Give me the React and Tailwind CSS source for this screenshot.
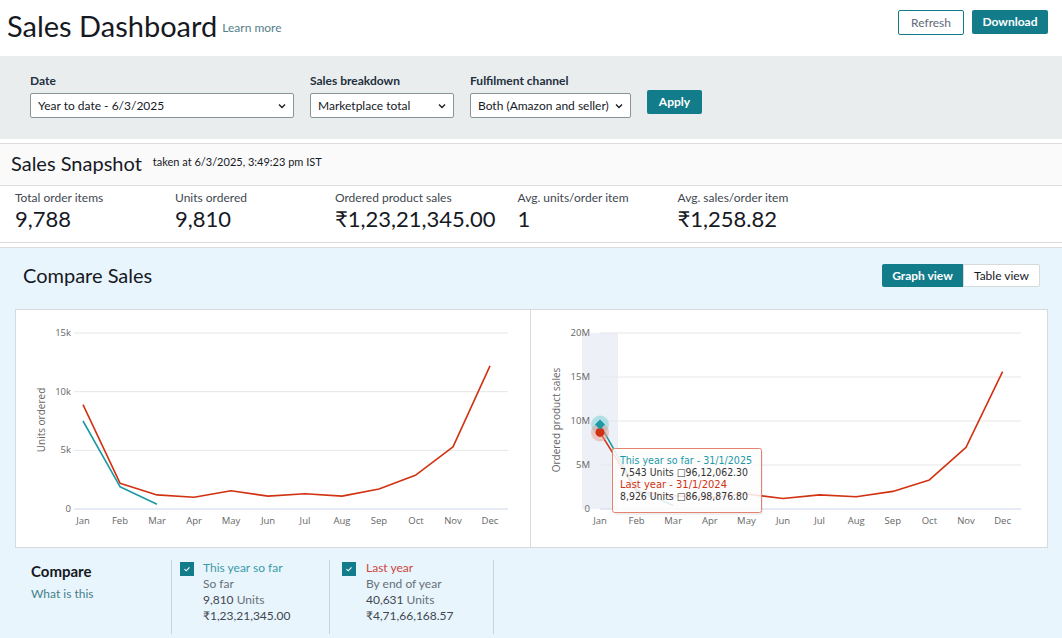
import React from 'react';

const months = ['Jan', 'Feb', 'Mar', 'Apr', 'May', 'Jun', 'Jul', 'Aug', 'Sep', 'Oct', 'Nov', 'Dec'];

const RED = '#d13212';
const TEAL = '#1b9aa6';

const pts = (vals, fx, fy) => vals.map((v, i) => `${fx(i)},${fy(v)}`).join(' ');

const UnitsChart = () => {
  const x = (i) => 83 + i * 37;
  const y = (v) => 509 - (v / 15000) * 176;
  const red = [8900, 2200, 1200, 1000, 1550, 1100, 1300, 1100, 1700, 2900, 5300, 12200];
  const teal = [7500, 1900, 400];
  const ticks = [
    [0, '0'],
    [5000, '5k'],
    [10000, '10k'],
    [15000, '15k'],
  ];
  return (
    <svg viewBox="16 310 514 237" className="block w-full h-full" style={{ fontFamily: "'Open Sans', sans-serif" }}>
      {ticks.map(([v, label]) => (
        <g key={label}>
          <line x1="74" x2="508" y1={y(v)} y2={y(v)} stroke={v === 0 ? '#ccd6eb' : '#e6e6e6'} strokeWidth="1" />
          <text x="71" y={y(v) + 3} textAnchor="end" fontSize="9.5" fill="#666">
            {label}
          </text>
        </g>
      ))}
      {months.map((m, i) => (
        <text key={m} x={x(i)} y="524" textAnchor="middle" fontSize="9.5" fill="#666">
          {m}
        </text>
      ))}
      <text x="45" y="420" transform="rotate(-90 45 420)" textAnchor="middle" fontSize="10" fill="#666">
        Units ordered
      </text>
      <polyline points={pts(red, x, y)} fill="none" stroke={RED} strokeWidth="1.6" strokeLinejoin="round" />
      <polyline points={pts(teal, x, y)} fill="none" stroke={TEAL} strokeWidth="1.6" strokeLinejoin="round" />
    </svg>
  );
};

const SalesChart = () => {
  const x = (i) => 601 + i * 36.6;
  const y = (v) => 509 - (v / 20) * 176;
  const red = [8.7, 2.0, 1.5, 1.3, 1.7, 1.2, 1.6, 1.4, 2.0, 3.3, 7.0, 15.6];
  const teal = [9.6, 2.2, 0.4];
  const ticks = [
    [0, '0'],
    [5, '5M'],
    [10, '10M'],
    [15, '15M'],
    [20, '20M'],
  ];
  return (
    <svg viewBox="532 310 516 237" className="block w-full h-full" style={{ fontFamily: "'Open Sans', sans-serif" }}>
      <rect x="583" y="333" width="36" height="176" fill="#edf1f7" />
      {ticks.map(([v, label]) => (
        <g key={label}>
          <line x1="601" x2="1022" y1={y(v)} y2={y(v)} stroke={v === 0 ? '#ccd6eb' : '#e6e6e6'} strokeWidth="1" />
          <text x="591" y={y(v) + 3} textAnchor="end" fontSize="9.5" fill="#666">
            {label}
          </text>
        </g>
      ))}
      {months.map((m, i) => (
        <text key={m} x={x(i)} y="524" textAnchor="middle" fontSize="9.5" fill="#666">
          {m}
        </text>
      ))}
      <text x="561" y="420" transform="rotate(-90 561 420)" textAnchor="middle" fontSize="10" fill="#666">
        Ordered product sales
      </text>
      <polyline points={pts(red, x, y)} fill="none" stroke={RED} strokeWidth="1.6" strokeLinejoin="round" />
      <polyline points={pts(teal, x, y)} fill="none" stroke={TEAL} strokeWidth="1.6" strokeLinejoin="round" />
      <circle cx={x(0)} cy={y(9.6)} r="9" fill="#7fcfd8" opacity="0.55" />
      <circle cx={x(0)} cy={y(8.7)} r="9" fill="#e59b8c" opacity="0.5" />
      <circle cx={x(0)} cy={y(8.7)} r="4.5" fill={RED} />
      <path d={`M${x(0)} ${y(9.6) - 5} L${x(0) + 5} ${y(9.6)} L${x(0)} ${y(9.6) + 5} L${x(0) - 5} ${y(9.6)} Z`} fill={TEAL} />

      {/* tooltip */}
      <rect x="615" y="450" width="149" height="65" rx="2" fill="#000" opacity="0.06" />
      <rect x="613.5" y="448.5" width="149" height="64" rx="2" fill="#fff" fillOpacity="0.86" stroke="#e3826f" strokeWidth="1" />
      <g fontSize="10" style={{ fontFamily: "'DejaVu Sans', sans-serif" }}>
        <text x="621" y="464" fill="#1b9aa6" textLength="132" lengthAdjust="spacingAndGlyphs">
          This year so far - 31/1/2025
        </text>
        <text x="621" y="476" fill="#333" textLength="128" lengthAdjust="spacingAndGlyphs">
          7,543 Units □96,12,062.30
        </text>
        <text x="621" y="488" fill="#d13212" textLength="107" lengthAdjust="spacingAndGlyphs">
          Last year - 31/1/2024
        </text>
        <text x="621" y="500" fill="#333" textLength="128" lengthAdjust="spacingAndGlyphs">
          8,926 Units □86,98,876.80
        </text>
      </g>
    </svg>
  );
};

const Select = ({ value, width }) => (
  <div className={`${width} h-[25px] bg-white border border-[#879596] rounded-[2px] flex items-center justify-between pl-[7px] pr-[6px] text-[12px] text-[#16191f]`}>
    <span className="truncate">{value}</span>
    <svg width="10" height="10" viewBox="0 0 10 10" className="shrink-0">
      <path d="M2 3.5 L5 6.5 L8 3.5" fill="none" stroke="#16191f" strokeWidth="1.3" />
    </svg>
  </div>
);

const Metric = ({ label, value }) => (
  <div className="min-w-[160px] pr-[22px]">
    <div className="text-[12px] text-[#414750] leading-[14px]">{label}</div>
    <div className="text-[22px] text-[#16191f] leading-[26px] mt-[1px]">{value}</div>
  </div>
);

const Check = () => (
  <div className="w-[14px] h-[14px] bg-[#137c8b] flex items-center justify-center shrink-0 mt-[2px]">
    <svg width="8" height="8" viewBox="0 0 8 8">
      <path d="M1.5 4.2 L3.2 5.8 L6.5 2.3" fill="none" stroke="#fff" strokeWidth="1.1" />
    </svg>
  </div>
);

export default function App() {
  return (
    <div className="w-[1062px] h-[638px] overflow-hidden bg-white font-['Lato','Open_Sans',sans-serif] text-[#16191f]">
      {/* header */}
      <div className="h-[56px] flex justify-between">
        <div className="flex items-end pl-[7px] pb-[16px]">
          <h1 className="text-[29px] leading-none text-[#16191f]">Sales Dashboard</h1>
          <a className="text-[12px] text-[#55808a] ml-[5px] mb-[3px]">Learn more</a>
        </div>
        <div className="flex items-start gap-[8px] pt-[10px] pr-[14px]">
          <button className="w-[66px] h-[25px] border border-[#137c8b] rounded-[2px] text-[12px] text-[#5f6b7a] bg-white">Refresh</button>
          <button className="w-[76px] h-[24px] bg-[#137c8b] rounded-[2px] text-[12px] font-bold text-white">Download</button>
        </div>
      </div>

      {/* filters */}
      <div className="h-[83px] bg-[#eaeded] flex items-start gap-[16px] pl-[30px] pt-[18px]">
        <div>
          <div className="text-[12px] font-bold text-[#232f3e] leading-[14px] mb-[5px]">Date</div>
          <Select value="Year to date - 6/3/2025" width="w-[264px]" />
        </div>
        <div>
          <div className="text-[12px] font-bold text-[#232f3e] leading-[14px] mb-[5px]">Sales breakdown</div>
          <Select value="Marketplace total" width="w-[144px]" />
        </div>
        <div>
          <div className="text-[12px] font-bold text-[#232f3e] leading-[14px] mb-[5px]">Fulfilment channel</div>
          <Select value="Both (Amazon and seller)" width="w-[161px]" />
        </div>
        <button className="mt-[16px] w-[55px] h-[24px] bg-[#137c8b] rounded-[2px] text-[12px] font-bold text-white">Apply</button>
      </div>

      {/* snapshot */}
      <div className="mt-[4px] border-t border-b border-[#dddddd] bg-[#fafafa] h-[43px] flex items-start pl-[11px] pt-[7px]">
        <span className="text-[20px] leading-[24px] text-[#16191f]">Sales Snapshot</span>
        <span className="text-[11px] text-[#16191f] ml-[11px] mt-[3px]">taken at 6/3/2025, 3:49:23 pm IST</span>
      </div>
      <div className="h-[57px] border-b border-[#dddddd] flex pl-[15px] pt-[5px]">
        <Metric label="Total order items" value="9,788" />
        <Metric label="Units ordered" value="9,810" />
        <Metric label="Ordered product sales" value="₹1,23,21,345.00" />
        <Metric label="Avg. units/order item" value="1" />
        <Metric label="Avg. sales/order item" value="₹1,258.82" />
      </div>

      {/* compare sales */}
      <div className="mt-[4px] border-t border-[#dddddd] bg-[#e9f5fd] h-[391px]">
        <div className="flex items-start justify-between pl-[23px] pr-[22px] pt-[15px] h-[61px]">
          <span className="text-[20px] leading-[24px] text-[#16191f]">Compare Sales</span>
          <div className="flex mt-[1px]">
            <button className="w-[81px] h-[23px] bg-[#137c8b] text-white font-bold text-[12px] rounded-l-[2px]">Graph view</button>
            <button className="w-[77px] h-[23px] bg-white border border-[#d5dbdb] text-[#16191f] text-[12px] rounded-r-[2px]">Table view</button>
          </div>
        </div>

        <div className="ml-[15px] mr-[14px] h-[239px] border border-[#d5dbdb] bg-white grid grid-cols-[515px_1fr]">
          <div className="border-r border-[#d5dbdb]">
            <UnitsChart />
          </div>
          <div>
            <SalesChart />
          </div>
        </div>

        <div className="flex pl-[15px] pt-[12px]">
          <div className="w-[157px] h-[74px] border-r border-[#c9d3d8] pl-[16px] pt-[2px]">
            <div className="text-[15px] font-bold text-[#16191f] leading-[18px]">Compare</div>
            <div className="text-[12px] text-[#44808a] mt-[5px]">What is this</div>
          </div>
          <div className="w-[158px] h-[74px] border-r border-[#c9d3d8] pl-[8px] flex gap-[9px]">
            <Check />
            <div className="text-[12px] leading-[16px]">
              <div className="text-[#3a9ba6]">This year so far</div>
              <div className="text-[#687078]">So far</div>
              <div><span className="text-[#414750]">9,810</span> <span className="text-[#687078]">Units</span></div>
              <div className="text-[#414750]">₹1,23,21,345.00</div>
            </div>
          </div>
          <div className="w-[164px] h-[74px] border-r border-[#c9d3d8] pl-[12px] flex gap-[10px]">
            <Check />
            <div className="text-[12px] leading-[16px]">
              <div className="text-[#d0453b]">Last year</div>
              <div className="text-[#687078]">By end of year</div>
              <div><span className="text-[#414750]">40,631</span> <span className="text-[#687078]">Units</span></div>
              <div className="text-[#414750]">₹4,71,66,168.57</div>
            </div>
          </div>
        </div>
      </div>
    </div>
  );
}
